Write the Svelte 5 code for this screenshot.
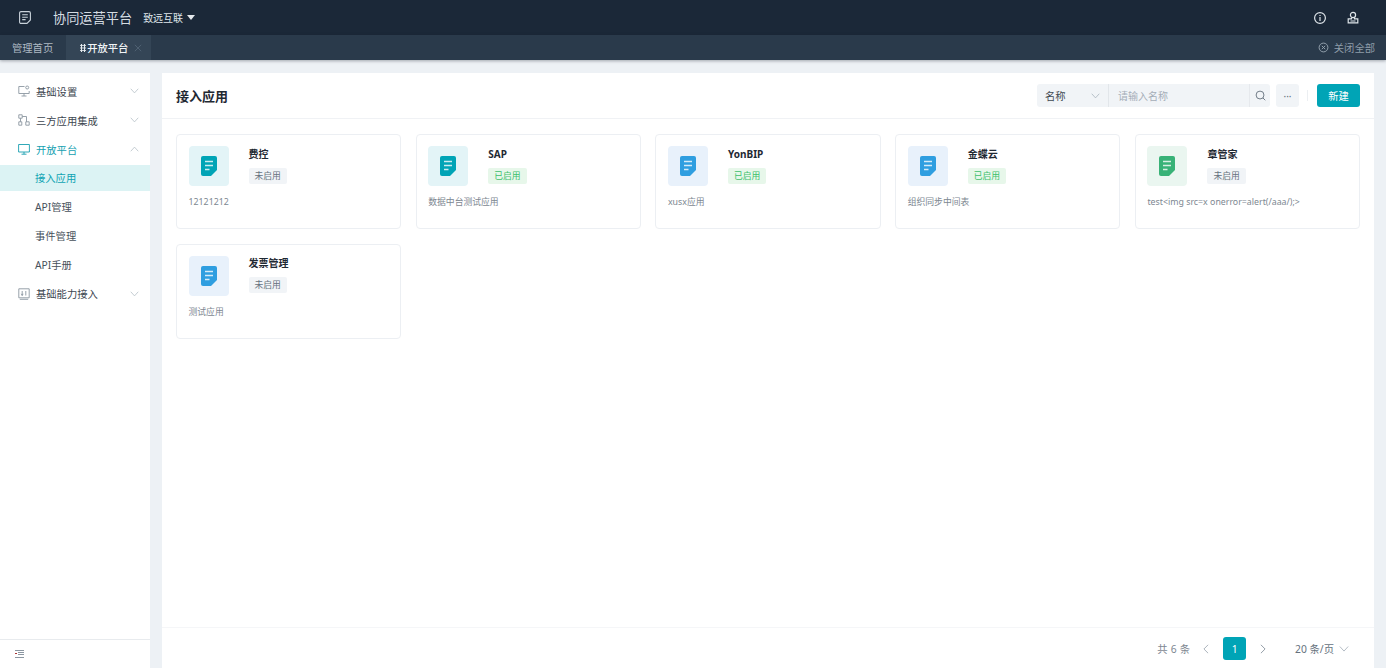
<script>
  const menu = [
    { label: '基础设置', icon: 'settings' },
    { label: '三方应用集成', icon: 'nodes' },
    { label: '开放平台', icon: 'screen', open: true, children: ['接入应用', 'API管理', '事件管理', 'API手册'] },
    { label: '基础能力接入', icon: 'ability' }
  ];

  const apps = [
    { name: '费控', on: false, desc: '12121212', tint: '#e3f4f7', color: '#00a4b6' },
    { name: 'SAP', on: true, desc: '数据中台测试应用', tint: '#e3f4f7', color: '#00a4b6' },
    { name: 'YonBIP', on: true, desc: 'xusx应用', tint: '#e8f1fb', color: '#2f9ee0' },
    { name: '金蝶云', on: true, desc: '组织同步中间表', tint: '#e8f1fb', color: '#2f9ee0' },
    { name: '章管家', on: false, desc: 'test<img src=x onerror=alert(/aaa/);>', tint: '#eaf6f0', color: '#38b277' },
    { name: '发票管理', on: false, desc: '测试应用', tint: '#e8f1fb', color: '#2f9ee0' }
  ];
</script>

<div class="page">
  <header class="topbar">
    <svg class="logo" viewBox="0 0 12 13" width="12" height="13" fill="none" stroke="#c9d2da" stroke-width="1.1">
      <path d="M2 .6h8a1.400 1.400 0 0 1 1.400 1.400v7l-3.400 3.400H2A1.400 1.400 0 0 1 .6 11V2A1.400 1.400 0 0 1 2 .6z" />
      <path d="M3.200 3.800h5.600M3.200 6.200h5.600M3.200 8.600h3.400" />
    </svg>
    <span class="brand">协同运营平台</span>
    <span class="org">致远互联</span>
    <span class="caret"></span>
    <span class="grow"></span>
    <svg class="top-icon" viewBox="0 0 14 14" width="14" height="14" fill="none" stroke="#dfe5ea" stroke-width="1.2">
      <circle cx="7" cy="7" r="5.400" />
      <path d="M7 4v.9M7 6v4" />
    </svg>
    <svg class="top-icon" viewBox="0 0 14 14" width="14" height="14" fill="none" stroke="#dfe5ea" stroke-width="1.2">
      <circle cx="7" cy="4" r="2.600" />
      <path d="M5.500 6.500v1.300H2.200v4h9.600v-4H8.500V6.500M4.500 10h5" />
    </svg>
  </header>

  <nav class="tabs">
    <span class="tab">管理首页</span>
    <span class="tab active">
      <span class="dots"></span>开放平台
      <svg viewBox="0 0 10 10" width="8" height="8" stroke="#56677a" stroke-width="1"><path d="M1 1l8 8M9 1l-8 8" /></svg>
    </span>
    <span class="grow"></span>
    <span class="close-all">
      <svg viewBox="0 0 12 12" width="11" height="11" fill="none" stroke="#9aa7b3" stroke-width="1"><circle cx="6" cy="6" r="4.800" /><path d="M4.200 4.200l3.600 3.600M7.800 4.200l-3.600 3.600" /></svg>
      关闭全部
    </span>
  </nav>

  <div class="body">
    <aside class="sidebar">
      <ul class="menu">
        {#each menu as item}
          <li class="item" class:open={item.open}>
            <svg class="item-icon" viewBox="0 0 12 12" width="12" height="12" fill="none" stroke="currentColor" stroke-width=".9">
              {#if item.icon === 'settings'}
                <path d="M6.500 1.500H.8v7h10.400V6M6 8.500v2.500M3.500 11h5" /><circle cx="9.200" cy="2.500" r="1.500" />
              {:else if item.icon === 'nodes'}
                <path d="M.8.800h3.400v3.400H.8zM7.800 7.800h3.400v3.400H7.800zM.8 7.800h3v3.400h-3zM2.500 4.200v3.600M4.200 2.500h4.300v5.300" />
              {:else if item.icon === 'screen'}
                <path d="M.6 1.500h10.800v7.500H.6zM6 9v2.200M3.500 11.200h5" />
              {:else}
                <path d="M.8.800h10.400v9H.8zM1.800 11.300h8.400M4.200 3v4.500M3.300 5.800l.9 1.700.9-1.700M7.800 3v4.500" />
              {/if}
            </svg>
            <span class="item-label">{item.label}</span>
            <svg class="chev" viewBox="0 0 12 7" width="9" height="6" fill="none" stroke="#b9c2ca" stroke-width="1.100">
              <path d={item.open ? 'M1 6.500L6 1l5 5.500' : 'M1 .5L6 6l5-5.500'} />
            </svg>
          </li>
          {#if item.children}
            {#each item.children as sub, i}
              <li class="sub" class:current={i === 0}>{sub}</li>
            {/each}
          {/if}
        {/each}
      </ul>
      <div class="collapse">
        <svg viewBox="0 0 9 8" width="9" height="8" fill="none" stroke="#8b96a1" stroke-width="1">
          <path d="M0 .5h9M3 2.500h6M3 4.500h6M0 7.500h9" /><path d="M0 3.500h2" stroke="#a33" />
        </svg>
      </div>
    </aside>

    <main class="content">
      <div class="head">
        <h1>接入应用</h1>
        <span class="grow"></span>
        <div class="search">
          <span class="field">名称
            <svg viewBox="0 0 12 7" width="9" height="6" fill="none" stroke="#a6b0ba" stroke-width="1"><path d="M1 .5L6 6l5-5.500" /></svg>
          </span>
          <span class="input">请输入名称</span>
          <span class="search-btn">
            <svg viewBox="0 0 12 12" width="11" height="11" fill="none" stroke="#66727e" stroke-width="1"><circle cx="5.500" cy="5.500" r="4.300" /><path d="M8.600 8.600l2.600 2.600" /></svg>
          </span>
        </div>
        <span class="more">···</span>
        <span class="divider"></span>
        <button class="primary">新建</button>
      </div>

      <div class="grid">
        {#each apps as app}
          <article class="card">
            <div class="top">
              <div class="thumb" style="background:{app.tint}">
                <svg viewBox="0 0 16 20" width="16" height="20">
                  <path d="M2 0h12a2 2 0 0 1 2 2v12l-6 6H2a2 2 0 0 1-2-2V2a2 2 0 0 1 2-2z" fill={app.color} />
                  <path d="M4 5.500h8M4 9.500h8M4 13.500h4.500" stroke="#fff" stroke-width="1.500" opacity=".8" />
                </svg>
              </div>
              <div class="meta">
                <div class="name">{app.name}</div>
                <span class="badge" class:on={app.on}>{app.on ? '已启用' : '未启用'}</span>
              </div>
            </div>
            <p class="desc">{app.desc}</p>
          </article>
        {/each}
      </div>

      <footer class="pager">
        <span class="total">共 6 条</span>
        <svg class="arrow prev" viewBox="0 0 7 12" width="6" height="10" fill="none" stroke="#9aa5af" stroke-width="1"><path d="M6 1L1 6l5 5" /></svg>
        <span class="num">1</span>
        <svg class="arrow" viewBox="0 0 7 12" width="6" height="10" fill="none" stroke="#7f8b96" stroke-width="1"><path d="M1 1l5 5-5 5" /></svg>
        <span class="size">20 条/页
          <svg viewBox="0 0 12 7" width="10" height="6" fill="none" stroke="#a6b0ba" stroke-width="1"><path d="M1 .5L6 6l5-5.500" /></svg>
        </span>
      </footer>
    </main>
  </div>
</div>

<style>
  :global(body) {
    margin: 0;
    font-family: "Noto Sans", "Noto Sans CJK SC", sans-serif;
  }
  .page {
    height: 668px;
    display: flex;
    flex-direction: column;
    overflow: hidden;
    background: #edf1f5;
  }
  .grow { flex: 1; }

  .topbar {
    height: 35px;
    flex: none;
    display: flex;
    align-items: center;
    background: #1b2838;
    padding-left: 19px;
  }
  .brand {
    margin-left: 22px;
    font-size: 13.200px;
    color: #d5dce2;
  }
  .org {
    margin-left: 11px;
    font-size: 10px;
    color: #dfe5ea;
  }
  .caret {
    margin-left: 4px;
    border: 4px solid transparent;
    border-top: 5px solid #e4e9ed;
    border-bottom: 0;
  }
  .top-icon { margin-right: 19px; }
  .top-icon:last-child { margin-right: 26px; }

  .tabs {
    height: 25px;
    flex: none;
    display: flex;
    align-items: center;
    background: #2a3a4b;
    box-shadow: 0 1px 3px rgba(20, 30, 40, .35);
    font-size: 10.300px;
    color: #aeb9c3;
  }
  .tab {
    height: 100%;
    display: flex;
    align-items: center;
    padding: 0 13px 0 12px;
  }
  .tab.active {
    width: 85px;
    box-sizing: border-box;
    padding: 0 0 0 14px;
    background: #344556;
    color: #f2f5f7;
    font-weight: 500;
  }
  .tab.active svg { margin-left: 6px; }
  .dots {
    width: 6px;
    height: 8px;
    margin-right: 1px;
    background-image: radial-gradient(circle, #e6ebef 1.100px, transparent 1.300px);
    background-size: 3px 2.670px;
  }
  .close-all {
    display: flex;
    align-items: center;
    gap: 5px;
    padding-right: 11px;
    color: #8f9da9;
  }

  .body {
    flex: 1;
    min-height: 0;
    display: flex;
    gap: 12px;
    padding: 13px 12px 0 0;
  }

  .sidebar {
    width: 150px;
    flex: none;
    display: flex;
    flex-direction: column;
    background: #fff;
  }
  .menu {
    flex: 1;
    display: flex;
    flex-direction: column;
    list-style: none;
    margin: 0;
    padding: 4px 0 0;
  }
  .item {
    height: 28.900px;
    flex: none;
    display: flex;
    align-items: center;
    padding: 0 11px 0 18px;
    font-size: 10.300px;
    color: #8c97a1;
  }
  .item-label {
    flex: 1;
    margin-left: 6px;
    color: #3d4650;
  }
  .item.open { color: #1a9fb0; }
  .item.open .item-label { color: #149fb1; }
  .sub {
    height: 26px;
    flex: none;
    margin: 1px 0 1.900px;
    display: flex;
    align-items: center;
    padding-left: 35px;
    font-size: 10.300px;
    color: #47515b;
  }
  .sub.current {
    background: #dcf3f4;
    color: #0ea3b3;
  }
  .collapse {
    height: 28px;
    flex: none;
    display: flex;
    align-items: center;
    padding-left: 15px;
    border-top: 1px solid #e8ebee;
  }

  .content {
    flex: 1;
    min-width: 0;
    display: flex;
    flex-direction: column;
    background: #fff;
  }
  .head {
    height: 45px;
    flex: none;
    display: flex;
    align-items: center;
    padding: 0 14px;
    border-bottom: 1px solid #f0f2f5;
  }
  h1 {
    margin: 0;
    font-size: 13px;
    font-weight: 700;
    color: #1f2933;
  }
  .search {
    height: 23px;
    display: flex;
    align-items: center;
    background: #f1f4f7;
    border-radius: 3px;
    font-size: 10.300px;
  }
  .field {
    width: 72px;
    box-sizing: border-box;
    height: 100%;
    display: flex;
    align-items: center;
    justify-content: space-between;
    padding: 0 8px 0 8px;
    color: #3f4952;
    border-right: 1px solid #e2e6ea;
  }
  .input {
    width: 141px;
    box-sizing: border-box;
    height: 100%;
    display: flex;
    align-items: center;
    padding-left: 9px;
    font-size: 10px;
    color: #a5aeb7;
    border-right: 1px solid #e6e9ed;
  }
  .search-btn {
    width: 20px;
    display: flex;
    justify-content: center;
  }
  .more {
    width: 23px;
    height: 23px;
    margin-left: 6px;
    display: flex;
    align-items: center;
    justify-content: center;
    background: #f1f4f7;
    border-radius: 3px;
    font-size: 10px;
    color: #66727e;
  }
  .divider {
    width: 1px;
    height: 11px;
    margin: 0 9px 0 8px;
    background: #eceff2;
  }
  .primary {
    width: 43px;
    height: 23px;
    padding: 0;
    border: 0;
    border-radius: 3px;
    background: #00a4b6;
    color: #fff;
    font: inherit;
    font-size: 10.300px;
  }

  .grid {
    flex: 1;
    display: grid;
    grid-template-columns: repeat(5, 1fr);
    grid-auto-rows: 95px;
    align-content: start;
    gap: 14.700px;
    padding: 15px 14px;
  }
  .card {
    box-sizing: border-box;
    padding: 11px 11.500px;
    border: 1px solid #eceff3;
    border-radius: 4px;
  }
  .top { display: flex; }
  .thumb {
    width: 40px;
    height: 40px;
    display: flex;
    align-items: center;
    justify-content: center;
    border-radius: 4px;
  }
  .meta { margin-left: 20px; }
  .name {
    height: 15px;
    line-height: 15px;
    margin-top: .500px;
    font-size: 10px;
    font-weight: 700;
    color: #1f2933;
  }
  .badge {
    display: inline-block;
    height: 16px;
    line-height: 16px;
    margin-top: 6px;
    padding: 0 6px;
    border-radius: 2px;
    background: #f1f4f7;
    font-size: 8.800px;
    color: #66727e;
  }
  .badge.on {
    background: #e7f7ea;
    color: #3cc06a;
  }
  .desc {
    margin: 9px 0 0;
    line-height: 15px;
    font-size: 8.800px;
    color: #7d8791;
  }

  .pager {
    height: 41px;
    flex: none;
    box-sizing: border-box;
    padding: 1px 25px 0 0;
    display: flex;
    align-items: center;
    justify-content: flex-end;
    border-top: 1px solid #f5f6f8;
    font-size: 10.300px;
    color: #7d8791;
  }
  .total { word-spacing: .500px; }
  .arrow { margin-left: 14px; }
  .arrow.prev { margin-left: 13px; }
  .num {
    width: 23px;
    height: 23px;
    margin-left: 14px;
    display: flex;
    align-items: center;
    justify-content: center;
    border-radius: 3px;
    background: #00a4b6;
    color: #fff;
  }
  .size {
    display: flex;
    align-items: center;
    gap: 5px;
    margin-left: 29px;
    color: #66727e;
  }
</style>
